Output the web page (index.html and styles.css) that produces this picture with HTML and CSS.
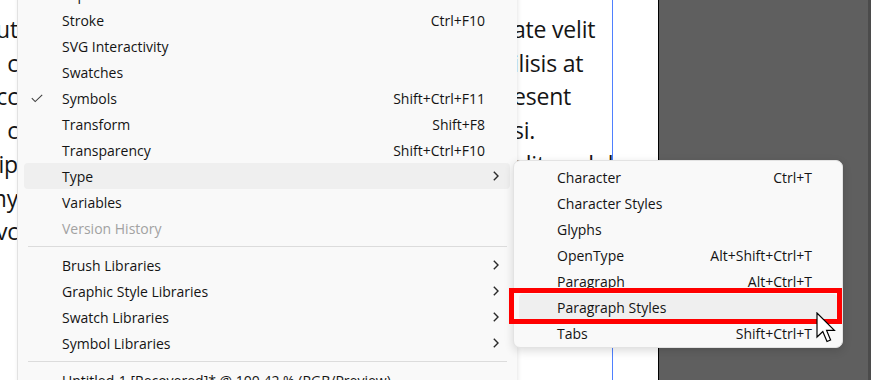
FILE: index.html
```html
<!DOCTYPE html>
<html lang="en">
<head>
<meta charset="utf-8">
<title>Window menu - Type submenu</title>
<link rel="stylesheet" href="styles.css">
</head>
<body>
<div class="canvas">
  <div class="page">
    <div class="col-left">
      <div class="ln"><span>ut</span></div>
      <div class="ln"><span>c</span></div>
      <div class="ln"><span>cc</span></div>
      <div class="ln"><span>c</span></div>
      <div class="ln"><span>ip</span></div>
      <div class="ln"><span>my</span></div>
      <div class="ln"><span>vc</span></div>
    </div>
    <div class="col-right">
      <div class="ln">ate velit</div>
      <div class="ln">ilisis at</div>
      <div class="ln">esent</div>
      <div class="ln">si.</div>
      <div class="ln">elit, sed d</div>
    </div>
  </div>
  <div class="paste"></div>
  <div class="edge"></div>
</div>

<div class="menu main-menu">
  <div class="item"><span class="mark"></span><span class="label">Separations Preview</span><span class="key"></span><span class="arrow"></span></div>
  <div class="item"><span class="mark"></span><span class="label">Stroke</span><span class="key">Ctrl+F10</span><span class="arrow"></span></div>
  <div class="item"><span class="mark"></span><span class="label">SVG Interactivity</span><span class="key"></span><span class="arrow"></span></div>
  <div class="item"><span class="mark"></span><span class="label">Swatches</span><span class="key"></span><span class="arrow"></span></div>
  <div class="item"><span class="mark"><svg class="check" width="12" height="9" viewBox="0 0 12 9"><polyline points="0.8,4.2 4.2,7.6 11.2,0.8"/></svg></span><span class="label">Symbols</span><span class="key">Shift+Ctrl+F11</span><span class="arrow"></span></div>
  <div class="item"><span class="mark"></span><span class="label">Transform</span><span class="key">Shift+F8</span><span class="arrow"></span></div>
  <div class="item"><span class="mark"></span><span class="label">Transparency</span><span class="key">Shift+Ctrl+F10</span><span class="arrow"></span></div>
  <div class="item hover"><span class="mark"></span><span class="label">Type</span><span class="key"></span><span class="arrow"><svg class="chev" width="6" height="10" viewBox="0 0 6 10"><polyline points="0.8,0.8 5,5 0.8,9.2"/></svg></span></div>
  <div class="item"><span class="mark"></span><span class="label">Variables</span><span class="key"></span><span class="arrow"></span></div>
  <div class="item disabled"><span class="mark"></span><span class="label">Version History</span><span class="key"></span><span class="arrow"></span></div>
  <div class="sep"></div>
  <div class="item"><span class="mark"></span><span class="label">Brush Libraries</span><span class="key"></span><span class="arrow"><svg class="chev" width="6" height="10" viewBox="0 0 6 10"><polyline points="0.8,0.8 5,5 0.8,9.2"/></svg></span></div>
  <div class="item"><span class="mark"></span><span class="label">Graphic Style Libraries</span><span class="key"></span><span class="arrow"><svg class="chev" width="6" height="10" viewBox="0 0 6 10"><polyline points="0.8,0.8 5,5 0.8,9.2"/></svg></span></div>
  <div class="item"><span class="mark"></span><span class="label">Swatch Libraries</span><span class="key"></span><span class="arrow"><svg class="chev" width="6" height="10" viewBox="0 0 6 10"><polyline points="0.8,0.8 5,5 0.8,9.2"/></svg></span></div>
  <div class="item"><span class="mark"></span><span class="label">Symbol Libraries</span><span class="key"></span><span class="arrow"><svg class="chev" width="6" height="10" viewBox="0 0 6 10"><polyline points="0.8,0.8 5,5 0.8,9.2"/></svg></span></div>
  <div class="sep"></div>
  <div class="item"><span class="mark"></span><span class="label">Untitled-1 [Recovered]* @ 100.42 % (RGB/Preview)</span><span class="key"></span><span class="arrow"></span></div>
</div>

<div class="menu sub-menu">
  <div class="item"><span class="mark"></span><span class="label">Character</span><span class="key">Ctrl+T</span><span class="arrow"></span></div>
  <div class="item"><span class="mark"></span><span class="label">Character Styles</span><span class="key"></span><span class="arrow"></span></div>
  <div class="item"><span class="mark"></span><span class="label">Glyphs</span><span class="key"></span><span class="arrow"></span></div>
  <div class="item"><span class="mark"></span><span class="label">OpenType</span><span class="key">Alt+Shift+Ctrl+T</span><span class="arrow"></span></div>
  <div class="item"><span class="mark"></span><span class="label">Paragraph</span><span class="key">Alt+Ctrl+T</span><span class="arrow"></span></div>
  <div class="item hover"><span class="mark"></span><span class="label">Paragraph Styles</span><span class="key"></span><span class="arrow"></span></div>
  <div class="item"><span class="mark"></span><span class="label">Tabs</span><span class="key">Shift+Ctrl+T</span><span class="arrow"></span></div>
</div>

<div class="annot"></div>

<svg class="cursor" width="22" height="34" viewBox="0 0 22 34">
  <path d="M1,1 L1,25 L6.8,19.6 L11,29.5 L14.6,28 L10.6,18.4 L18.4,18.4 Z" fill="#fff" stroke="#000" stroke-width="1.2" stroke-linejoin="miter"/>
</svg>
</body>
</html>
```

FILE: styles.css
```css
* { box-sizing: border-box; }

html, body {
  margin: 0;
  padding: 0;
}

body {
  width: 871px;
  height: 380px;
  overflow: hidden;
  position: relative;
  background: #ffffff;
  font-family: "Open Sans", "Noto Sans", sans-serif;
}

/* ---------- document canvas ---------- */
.canvas {
  display: flex;
  height: 380px;
}

.page {
  width: 659px;
  height: 380px;
  background: #ffffff;
  border-right: 1px solid #000000;
  display: flex;
  align-items: flex-start;
  font-family: "Open Sans", "Noto Sans", sans-serif;
  font-size: 23px;
  letter-spacing: -0.2px;
  line-height: 33.7px;
  color: #151515;
}

.col-left {
  width: 18px;
  padding-top: 13px;
  overflow: hidden;
}

.col-left .ln {
  display: flex;
  justify-content: flex-end;
  white-space: nowrap;
  overflow: hidden;
}

.col-right {
  margin-left: 495px;
  width: 100px;
  height: 380px;
  padding-top: 13px;
  border-right: 1px solid #4f80ff;
  white-space: nowrap;
}

.paste {
  flex: 1;
  background: #5f5f5f;
}

.edge {
  width: 3px;
  background: #4b4b4b;
}

/* ---------- menus ---------- */
.menu {
  position: absolute;
  background: #f9f9f9;
  font-size: 14px;
  color: #141414;
}

.main-menu {
  left: 17px;
  top: -23px;
  width: 500px;
  padding: 4px 7px 4px 6px;
  border-left: 1px solid #e2e2e2;
  box-shadow: 1px 0 4px rgba(0, 0, 0, 0.10);
}

.sub-menu {
  left: 513px;
  top: 160px;
  width: 330px;
  padding: 3px 5px 1px 5px;
  border: 1px solid #e3e3e3;
  border-radius: 7px;
  box-shadow: 0 3px 10px rgba(0, 0, 0, 0.14);
}

.item {
  display: grid;
  grid-template-columns: 38px 1fr auto 25px;
  align-items: center;
  height: 26px;
  border-radius: 4px;
  white-space: nowrap;
}

.item.hover {
  background: #efefef;
}

.item.disabled {
  color: #a2a2a2;
}

.mark {
  display: flex;
  align-items: center;
  padding-left: 7px;
}

.check polyline {
  fill: none;
  stroke: #404040;
  stroke-width: 1.1;
}

.arrow {
  display: flex;
  align-items: center;
  padding-left: 8px;
}

.chev polyline {
  fill: none;
  stroke: #2a2a2a;
  stroke-width: 1.4;
}

.sep {
  height: 11px;
  margin: 0 3px 0 4px;
  display: flex;
  align-items: center;
}

.sep::before {
  content: "";
  display: block;
  width: 100%;
  height: 1px;
  background: #dcdcdc;
}

/* ---------- annotation & pointer ---------- */
.annot {
  position: absolute;
  left: 509px;
  top: 288px;
  width: 333px;
  height: 36px;
  border: 5px solid #ff0000;
}

.cursor {
  position: absolute;
  left: 816px;
  top: 312px;
}
```
